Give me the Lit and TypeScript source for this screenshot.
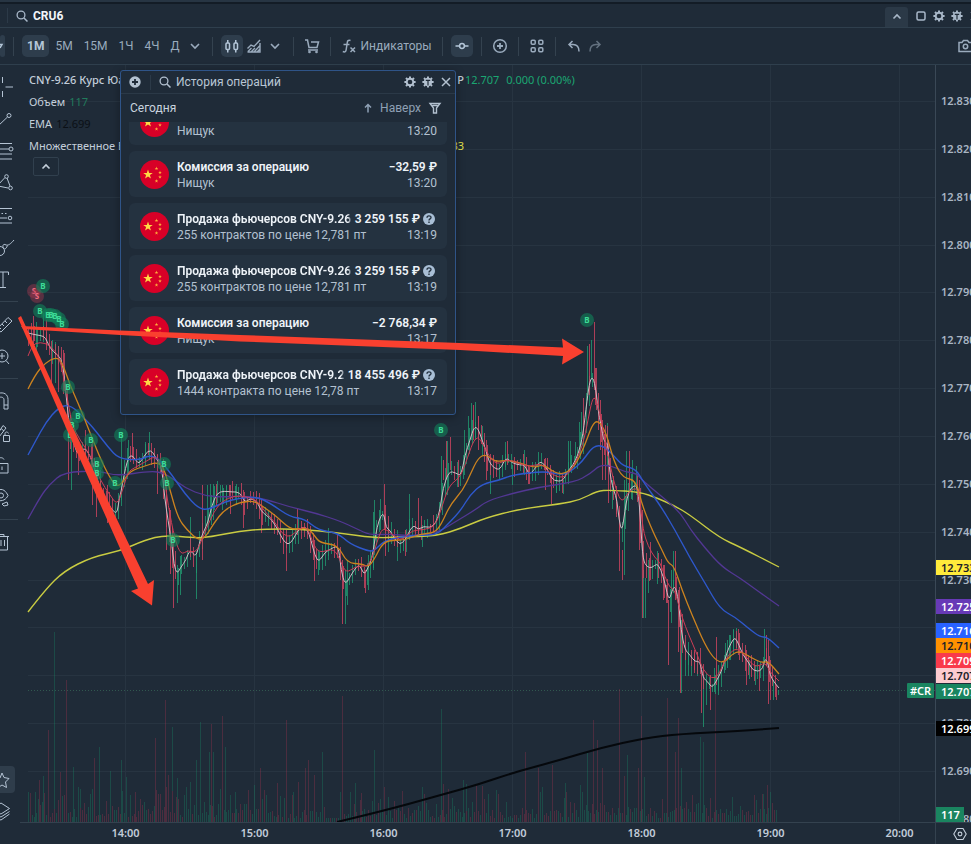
import { LitElement, html, svg, css } from "lit";
import { customElement } from "lit/decorators.js";

type Pt = [number, number];

const HOUR = 129;
const FIRST_HOUR_X = 125;
const PRICE_STEP = 47.86;
const FIRST_PRICE_Y = 101;
const BASE_Y = 822;

const pts = (s: string): Pt[] =>
  s.trim().split(/\s+/).map((p) => p.split(",").map(Number) as Pt);

const FAST = pts(`28,333 36,335 44,336 47,341 50,348 57,355 61,358 64,373 67,405 70,430 75,447 78,455 84,447 90,455 95,470 100,490 106,500
112,510 117,514 119,500 121,492 124,475 127,462 130,455 134,457 138,464 142,460 148,450 153,452 156,459 161,464 163,480 165,500 168,520
172,545 174,565 177,574 181,567 186,560 190,549 196,558 200,540 204,531 208,522 212,505 217,493 224,491 232,492 240,492 245,503 250,498
257,501 261,511 266,515 272,520 278,530 283,540 288,545 293,540 298,530 303,527 307,528 311,540 315,556 319,562 325,552 331,549 336,546
339,550 341,570 345,585 350,577 356,567 360,565 364,575 368,568 372,558 374,545 377,527 381,515 384,514 386,528 390,530 394,538 400,545
405,540 410,530 414,525 418,530 424,526 430,528 436,523 440,510 443,488 449,471 456,473 461,476 465,455 470,440 474,427 478,428 482,440
486,450 489,462 494,468 500,470 506,457 512,463 520,465 525,465 529,475 534,470 540,461 545,465 550,475 554,481 563,481 567,472 573,465
578,455 583,435 587,400 590,380 593,377 596,390 598,410 601,425 604,442 608,443 609,465 611,480 614,491 617,500 619,520 622,532 625,510
627,498 631,487 637,485 639,500 641,530 643,560 647,567 652,568 657,563 661,570 665,583 669,602 673,587 676,588 679,605 681,630 685,650
690,655 695,662 700,661 703,678 708,682 712,688 717,680 722,670 727,652 731,643 735,637 739,645 743,655 749,663 753,671 762,671 765,658
768,663 770,675 774,682 779,688`);
const RED = pts(`28,356 32,345 40,342 50,345 60,358 65,385 72,425 80,440 90,455 100,480 110,495 117,505 122,492 128,472 134,468 145,462 155,456
160,462 164,475 168,505 175,540 181,555 188,550 196,553 203,537 210,520 218,505 228,498 240,495 257,500 265,512 275,522 283,535 291,537
298,529 307,526 314,546 320,553 334,548 341,562 346,573 355,567 362,566 368,566 374,553 380,532 385,528 396,538 403,540 412,530 424,530
435,526 441,510 449,485 461,477 470,450 475,438 480,438 488,455 497,465 507,459 518,463 530,467 541,463 549,473 563,479 573,468 583,445
588,420 592,400 595,397 598,405 604,435 610,465 616,490 622,503 628,492 637,487 640,500 643,530 648,546 655,558 660,562 665,577 670,588
675,590 681,615 690,638 697,654 703,670 712,679 718,676 725,660 735,647 745,655 755,668 765,662 770,672 779,681`);
const ORANGE = pts(`28,389 35,375 45,363 56,357 62,362 70,385 78,403 87,425 100,458 110,478 117,487 123,482 130,471 145,466 157,462 164,468
170,490 178,518 187,530 198,540 205,538 214,523 224,510 240,502 255,501 265,508 276,516 290,529 300,529 308,528 314,535 320,543 338,545
347,563 362,564 368,567 374,560 383,542 395,540 405,540 420,534 434,533 441,525 450,505 463,490 470,475 478,458 486,454 495,462 507,460
520,463 535,468 543,464 555,473 565,474 575,466 585,445 592,425 598,420 606,432 614,462 623,478 636,480 642,505 653,532 662,550 668,563
674,566 682,590 692,615 705,645 715,660 724,663 732,654 740,651 750,657 762,663 768,661 779,674`);
const BLUE = pts(`28,455 35,442 46,422 58,408 70,404 86,420 95,430 108,447 119,459 140,460 150,455 160,460 172,475 185,494 198,508 208,510
224,502 240,498 257,497 270,503 290,517 305,519 318,530 338,533 350,544 368,551 374,551 384,541 400,537 420,535 437,535 450,522 461,510
470,495 482,484 500,480 512,475 545,471 560,475 570,472 582,462 590,450 597,445 605,447 614,456 623,466 636,469 644,483 660,505 675,530
690,558 705,583 720,609 735,617 748,628 760,637 767,637 779,648`);
const PURPLE = pts(`28,519 40,497 50,484 64,472 100,471 117,476 150,471 165,473 185,488 205,496 225,497 245,496 265,499 290,507 315,513
340,521 357,529 370,535 390,534 410,536 437,533 455,522 475,510 487,501 510,494 540,487 575,482 590,474 600,465 612,466 625,472 636,473
643,481 660,495 680,512 690,529 705,548 722,567 740,578 755,589 779,606`);
const YELLOW = pts(`28,612 45,590 64,571 92,557 120,551 145,540 165,535 195,538 210,537 240,531 265,529 300,529 340,533 375,538 400,537
437,536 462,528 485,518 520,509 560,504 580,500 597,491 610,490 640,492 657,498 675,506 690,515 720,538 740,547 779,567`);
const BLACK = pts(`337,822 383,811 441,795 480,784 512,773 560,760 600,748 645,738 680,734 740,731 779,728`);

const linePath = (p: Pt[]): string => {
  let d = `M${p[0][0]} ${p[0][1]}`;
  for (let i = 1; i < p.length - 1; i++) {
    const mx = (p[i][0] + p[i + 1][0]) / 2;
    const my = (p[i][1] + p[i + 1][1]) / 2;
    d += `Q${p[i][0]} ${p[i][1]} ${mx} ${my}`;
  }
  const last = p[p.length - 1];
  return d + `L${last[0]} ${last[1]}`;
};

const valueAt = (p: Pt[], x: number): number => {
  for (let i = 1; i < p.length; i++) {
    if (x <= p[i][0]) {
      const [x0, y0] = p[i - 1];
      const [x1, y1] = p[i];
      return y0 + ((y1 - y0) * (x - x0)) / (x1 - x0);
    }
  }
  return p[p.length - 1][1];
};

let seed = 41;
const rnd = (): number => {
  seed = (seed * 1103515245 + 12345) % 2147483648;
  return seed / 2147483648;
};

/* Wicks that stand out from the rest: x, high, low, rising */
const SPIKES: [number, number, number, number][] = [
  [33, 316, 345, 0], [36, 322, 352, 1], [43, 313, 342, 1], [46, 320, 350, 0], [51, 341, 384, 0], [55, 342, 383, 1], [58, 346, 392, 0],
  [63, 350, 394, 0], [68, 425, 480, 0], [71, 440, 490, 1], [78, 440, 475, 0], [85, 430, 460, 0], [92, 440, 505, 0], [96, 470, 517, 0],
  [100, 470, 500, 1], [107, 485, 523, 0], [121, 435, 500, 1], [128, 440, 475, 1], [132, 433, 460, 0], [145, 442, 466, 1],
  [149, 432, 460, 1], [157, 455, 494, 0], [166, 480, 550, 0], [170, 510, 574, 0], [173, 540, 608, 0], [177, 565, 603, 1],
  [180, 556, 595, 1], [190, 517, 560, 1], [196, 555, 599, 1], [202, 485, 560, 0], [207, 485, 525, 1], [210, 484, 520, 1],
  [213, 484, 520, 1], [216, 484, 505, 0], [222, 485, 510, 1], [226, 485, 505, 1], [230, 485, 514, 0], [236, 484, 505, 1],
  [243, 490, 528, 0], [261, 500, 533, 0], [286, 530, 571, 0], [297, 508, 535, 0], [314, 540, 581, 0], [318, 550, 575, 1],
  [328, 528, 556, 1], [342, 560, 624, 0], [345, 570, 624, 1], [347, 560, 605, 1], [365, 570, 593, 0], [368, 555, 590, 1],
  [373, 512, 570, 1], [374, 500, 555, 1], [380, 499, 530, 1], [384, 484, 530, 0], [385, 505, 556, 0], [388, 525, 552, 1],
  [397, 530, 561, 1], [405, 530, 556, 0], [409, 494, 540, 1], [418, 498, 535, 0], [422, 525, 547, 1], [441, 456, 510, 1],
  [443, 460, 480, 0], [446, 441, 480, 0], [447, 441, 495, 1], [450, 437, 470, 0], [458, 460, 487, 0], [464, 430, 475, 1],
  [468, 416, 450, 1], [471, 403, 440, 1], [473, 405, 440, 0], [475, 402, 440, 1], [478, 416, 450, 0], [482, 426, 456, 1],
  [486, 440, 480, 0], [490, 458, 494, 1], [505, 442, 470, 1], [507, 441, 465, 0], [512, 465, 485, 1], [524, 450, 475, 1],
  [528, 465, 484, 0], [545, 458, 490, 0], [551, 470, 504, 0], [556, 475, 493, 1], [563, 480, 494, 1], [568, 441, 475, 1],
  [570, 441, 470, 1], [575, 442, 465, 1], [579, 422, 455, 1], [581, 412, 445, 1], [583, 398, 435, 0], [587, 346, 400, 1],
  [589, 344, 395, 0], [591, 340, 380, 1], [594, 322, 390, 0], [596, 368, 410, 0], [600, 400, 450, 0], [602, 420, 480, 0],
  [605, 425, 480, 0], [607, 423, 466, 1], [608, 440, 503, 0], [612, 480, 509, 1], [616, 495, 514, 0], [619, 510, 571, 0],
  [622, 550, 580, 0], [624, 480, 575, 1], [626, 451, 510, 1], [629, 451, 490, 0], [632, 460, 500, 1], [636, 466, 495, 1],
  [639, 480, 550, 0], [642, 510, 618, 0], [643, 570, 618, 1], [645, 578, 618, 1], [648, 560, 593, 1], [650, 542, 580, 0],
  [657, 551, 584, 1], [663, 565, 600, 0], [666, 585, 603, 0], [668, 600, 665, 0], [671, 570, 623, 1], [673, 551, 590, 1],
  [675, 551, 600, 0], [678, 590, 652, 0], [680, 610, 693, 0], [681, 620, 693, 1], [685, 652, 676, 1], [688, 652, 676, 1],
  [691, 652, 676, 1], [694, 652, 670, 0], [697, 652, 676, 1], [701, 670, 713, 0], [703, 676, 727, 1], [706, 680, 705, 1],
  [710, 675, 710, 0], [714, 668, 692, 1], [716, 637, 685, 0], [718, 665, 695, 1], [725, 643, 670, 1], [729, 635, 660, 1],
  [733, 630, 655, 1], [736, 628, 650, 1], [738, 629, 655, 0], [746, 650, 685, 0], [749, 660, 679, 1], [755, 665, 685, 1],
  [759, 665, 691, 0], [764, 629, 665, 1], [766, 635, 665, 0], [768, 640, 704, 0], [770, 660, 700, 0], [773, 680, 700, 1],
  [776, 685, 700, 0], [778, 690, 695, 1],
];

const WICKS: [number, number, number, number][] = [];
for (let x = 28; x < 778; x += 3) {
  const y = valueAt(FAST, x);
  const slope = valueAt(FAST, x + 3) - valueAt(FAST, x - 3);
  const reach = 3 + Math.abs(slope) / 4;
  WICKS.push([x, Math.round(y - reach - rnd() * 8), Math.round(y + reach + rnd() * 10), rnd() * 20 - 10 > slope ? 1 : 0]);
}

/* Tall volume bars: x, top, rising */
const VOLUME_PEAKS: [number, number, number][] = [
  [28, 795, 1], [35, 792, 1], [39, 780, 0], [43, 776, 1], [48, 730, 0], [54, 632, 1], [60, 772, 0], [66, 680, 0], [73, 767, 1],
  [80, 789, 1], [94, 758, 0], [99, 747, 1], [110, 771, 1], [121, 760, 1], [126, 777, 1], [135, 792, 0], [155, 738, 0], [165, 700, 0],
  [168, 775, 0], [172, 727, 1], [177, 778, 1], [190, 782, 1], [196, 760, 1], [200, 722, 1], [209, 752, 1], [211, 724, 0],
  [213, 752, 1], [222, 716, 0], [225, 747, 1], [235, 792, 1], [254, 785, 1], [260, 768, 0], [277, 783, 0], [286, 720, 0],
  [293, 792, 1], [298, 782, 0], [305, 768, 0], [308, 760, 0], [314, 775, 0], [322, 752, 1], [342, 696, 0], [355, 783, 1],
  [361, 793, 0], [374, 750, 1], [384, 787, 0], [441, 709, 1], [443, 784, 0], [463, 780, 1], [466, 784, 1], [476, 785, 0],
  [525, 752, 0], [538, 768, 0], [552, 765, 0], [565, 783, 1], [580, 785, 1], [587, 753, 1], [593, 720, 0], [597, 740, 0],
  [602, 768, 0], [619, 689, 0], [624, 776, 0], [627, 755, 1], [638, 768, 0], [641, 716, 0], [644, 777, 1], [667, 698, 0],
  [675, 752, 0], [678, 718, 0], [681, 768, 1], [700, 737, 1], [703, 742, 1], [715, 690, 0], [763, 794, 1], [767, 785, 0],
];
const VOLUME: [number, number, number][] = [];
for (let x = 28; x < 778; x += 2) {
  const busy = x > 155 && x < 180 ? 24 : 10;
  const h = x > 325 && x < 340 ? 4 : 4 + rnd() * busy + (rnd() > 0.66 ? rnd() * 24 : 0);
  VOLUME.push([x, Math.round(BASE_Y - h), (x > 155 && x < 176) || rnd() > 0.58 ? 0 : 1]);
}

const bars = (list: [number, number, number, number][], rising: number): string =>
  list.filter((b) => b[3] === rising).map((b) => `M${b[0] + 0.5} ${b[1]}V${b[2]}`).join("");
const volumeBars = (list: [number, number, number][], rising: number): string =>
  list.filter((b) => b[2] === rising).map((b) => `M${b[0] + 0.5} ${BASE_Y}V${b[1]}`).join("");

const BUYS = pts(`43,286 40,311 48,315 51,315 55,316 59,319 62,324 68,387 78,416 72,425 70,435 91,440 97,464 97,473 115,483 121,435
164,464 167,483 173,540 441,430 587,320`);
const SELLS = pts(`34,291 37,296`);

const TAGS: { label: string; y: number; tone: string }[] = [
  { label: "12.733", y: 567, tone: "yellow" },
  { label: "12.725", y: 606, tone: "purple" },
  { label: "12.716", y: 630, tone: "blue" },
  { label: "12.710", y: 645, tone: "orange" },
  { label: "12.709", y: 660, tone: "red" },
  { label: "12.707", y: 675, tone: "pink" },
  { label: "12.707", y: 691, tone: "green" },
  { label: "12.699", y: 728, tone: "black" },
];

const OPERATIONS = [
  { title: "Комиссия за операцию", note: "Нищук", sum: "−32,59 ₽", time: "13:20", help: false },
  { title: "Комиссия за операцию", note: "Нищук", sum: "−32,59 ₽", time: "13:20", help: false },
  { title: "Продажа фьючерсов CNY-9.26 Курс", note: "255 контрактов по цене 12,781 пт", sum: "3 259 155 ₽", time: "13:19", help: true },
  { title: "Продажа фьючерсов CNY-9.26 Курс", note: "255 контрактов по цене 12,781 пт", sum: "3 259 155 ₽", time: "13:19", help: true },
  { title: "Комиссия за операцию", note: "Нищук", sum: "−2 768,34 ₽", time: "13:17", help: false },
  { title: "Продажа фьючерсов CNY-9.26 Курс", note: "1444 контракта по цене 12,78 пт", sum: "18 455 496 ₽", time: "13:17", help: true },
];

const star = (cx: number, cy: number, r: number): string =>
  Array.from({ length: 10 }, (_, i) => {
    const a = -Math.PI / 2 + (i * Math.PI) / 5;
    const q = i % 2 ? r * 0.4 : r;
    return `${(cx + q * Math.cos(a)).toFixed(2)},${(cy + q * Math.sin(a)).toFixed(2)}`;
  }).join(" ");

const icon = (size: number, body: unknown) => html`<svg
  class="icon" width=${size} height=${size} viewBox="0 0 ${size} ${size}" fill="none" stroke="currentColor"
  stroke-width="1.5" aria-hidden="true">${body}</svg>`;

const TEETH = "M6 .4v1.800M6 9.800v1.800M.4 6h1.800M9.800 6h1.800M2 2l1.300 1.300M8.700 8.700L10 10M10 2L8.700 3.300M3.300 8.700L2 10";
const searchIcon = () => icon(12, svg`<circle cx="5" cy="5" r="3.900" stroke-width="1.300"/><path d="M8 8l3.500 3.500" stroke-width="1.500"/>`);
const gearIcon = () => icon(12, svg`<circle cx="6" cy="6" r="3.300" stroke-width="1.900"/><path stroke-width="2" d=${TEETH}/>`);
const bugIcon = () => icon(12, svg`<circle cx="6" cy="6" r="4.200" fill="currentColor" stroke="none"/>
  <path stroke-width="1.900" d=${TEETH}/><path class="cut" stroke-width="1.200" d="M6 4v5.500M3.800 4.300h4.400"/>`);
const closeIcon = () => icon(12, svg`<path d="M2 2l8 8M10 2l-8 8"/>`);
const chevronDown = () => icon(12, svg`<path stroke-width="1.600" d="M2 4l4 4 4-4"/>`);
const chevronUp = () => icon(12, svg`<path stroke-width="1.600" d="M2.500 7.500L6 4l3.500 3.500"/>`);

const RAIL: { name: string; art: unknown }[][] = [
  [
    { name: "Перекрестие", art: svg`<path d="M2.500 0v6M2.500 14v6M5.500 10H13"/>` },
    { name: "Линия тренда", art: svg`<path d="M-2 17L7.500 8"/><circle cx="9" cy="6.500" r="2"/>` },
    { name: "Уровни Фибоначчи", art: svg`<path d="M-2 2.500h14M-2 8h11M-2 13h14M-2 18h14"/><circle cx="11" cy="8" r="2"/>` },
    { name: "Паттерны", art: svg`<path d="M-2 12L5 4.500M7 5l3 8M-2 13l10 2"/><circle cx="6.500" cy="3.500" r="1.800"/><circle cx="10.500" cy="15" r="1.800"/>` },
    { name: "Прогноз", art: svg`<path d="M-2 3.500h14M-2 13h9M-2 18h14" /><path stroke-dasharray="1.500 2" d="M-2 8.500h10"/><circle cx="10" cy="13" r="1.800"/>` },
    { name: "Кисть", art: svg`<circle cx="0" cy="14" r="4.500"/><path d="M4 12c-2-3-1-5 1-4.500 3 2 6-1 9-4.500M4.500 12c1 0 2-1 3-3.500"/>` },
    { name: "Текст", art: svg`<path d="M-2 3h10.500v3M3 3v15M0 18.500h6"/>` },
  ],
  [
    { name: "Линейка", art: svg`<path d="M-3 15L8 3.500l4 3.500L1 18l-3-2M5 7l2 2M2 10l2 2M-1 13l2 2"/>` },
    { name: "Увеличить", art: svg`<circle cx="2" cy="10" r="6"/><path d="M-1 10h6M2 7v6M6 14.500l3 3.500"/>` },
  ],
  [
    { name: "Магнит", art: svg`<path d="M-2 2.500c6-2 10 1 10 6V18H4V9C4 6.500 2 5.500-2 6.500M4 14h4"/>` },
    { name: "Режим рисования", art: svg`<path d="M-3 12L3 2.500l3 2.500L-1 14M1 5.500l3 2.500M3.500 12.500h6v6h-6zM5 12.500v-2c0-2 3-2 3.500 0"/>` },
    { name: "Блокировка", art: svg`<path d="M-3 8.500H8V18H-3M2 11.500v3.500M-2 8V5c0-3 5-3 6-.5"/>` },
    { name: "Скрыть", art: svg`<path d="M-3 3.500c6-3 9 1 11 5-2 4-5 6-11 5M2 17l5-2 1 3-4 1z"/><circle cx="1" cy="8.500" r="2.500"/>` },
  ],
  [{ name: "Удалить", art: svg`<path d="M-2 4.500H9M-1 4V2.500h5V4M7.500 5v13H-2M4.500 8v6M1 8v6"/>` }],
];

@customElement("app-root")
export class AppRoot extends LitElement {
  static styles = css`
    :host {
      display: flex; flex-direction: column; min-height: 100vh; position: relative; overflow: hidden;
      background: #1f2b38; color: #a9b8c9; font: 12px/16px Roboto, "Noto Sans", sans-serif;
    }
    * { box-sizing: border-box; }
    button {
      font: inherit; color: inherit; background: none; border: 0; padding: 0; margin: 0; cursor: pointer;
      display: inline-flex; align-items: center; justify-content: center;
    }
    .icon { display: block; flex: none; overflow: visible; }
    .cut { stroke: #1f2b38; }
    .strip { height: 4px; border-bottom: 2px solid #131c26; background: #273543; }
    .head { display: flex; align-items: center; height: 24px; border-bottom: 1px solid #2f3f4d; padding-left: 7px; }
    .head .split { width: 1px; height: 15px; background: #2c3a48; margin-right: 8px; }
    .symbol { display: flex; align-items: center; gap: 5px; flex: 1; }
    .symbol strong { color: #f2f6fa; font-weight: 700; }
    .fold { width: 23px; height: 20px; background: #2b3947; border-radius: 3px 3px 0 0; margin: 3px 7px 0 0; }
    .tools { display: flex; align-items: center; gap: 6px; width: 56px; }
    .bar { display: flex; align-items: center; height: 37px; border-bottom: 1px solid #2f3f4d; gap: 1px; color: #9aabbd; }
    .bar .split { width: 1px; height: 19px; background: #34424f; margin: 0 7px; flex: none; }
    .bar button { height: 22px; padding: 0 5px; border-radius: 5px; flex: none; }
    .bar .square { width: 20px; padding: 0; }
    .bar .slim { width: 18px; padding: 0; }
    .bar .on { background: #2e3d4c; color: #b4c6d8; }
    .bar .square.on { width: 22px; }
    .bar .cropped { width: 5px; padding: 0; overflow: hidden; }
    .bar .wide { gap: 5px; padding: 0 2px 0 3px; }
    .bar .dim { color: #63717f; }
    .bar .end { margin-left: auto; width: 13px; padding: 0; justify-content: flex-start; overflow: hidden; }
    .main { flex: 1; display: grid; grid-template-columns: 20px 1fr 36px; grid-template-rows: minmax(0, 1fr) 22px; position: relative; }
    .rail { grid-row: 1 / 3; display: flex; flex-direction: column; padding-top: 6px; overflow: hidden; color: #b5c4d4; }
    .rail button { height: 32px; width: 20px; flex: none; overflow: hidden; }
    .rail hr { width: 18px; height: 1px; border: 0; background: #34424f; margin: 6px 0; }
    .rail .push { margin-top: auto; }
    .rail .fav { width: 15px; height: 27px; background: #2f3d4b; border-radius: 0 4px 4px 0; margin-bottom: 2px; }
    .rail .last { margin-bottom: 17px; }
    .plot { position: relative; min-width: 0; overflow: hidden; }
    .chart { position: absolute; inset: 0; width: 100%; height: 100%; display: block; }
    .mark { font: 700 8px/8px "Noto Sans", sans-serif; text-anchor: middle; }
    .legend {
      position: absolute; left: 9px; top: 4px; width: 546px; color: #c3ceda;
      font: 11px/16px "Noto Sans", sans-serif;
    }
    .legend p { margin: 0; height: 22px; display: flex; align-items: center; gap: 4px; white-space: nowrap; }
    .legend .span { width: 435px; flex: none; display: flex; justify-content: space-between; }
    .legend .first { gap: 1px; font-weight: 500; }
    .legend .value { font-weight: 400; }
    .up { color: #1ba672; }
    .down { color: #217b5c; }
    .dark { color: #0b1016; }
    .gold { color: #e0e34c; }
    .legend .toggle { width: 26px; height: 19px; border: 1px solid #31404e; border-radius: 2px; margin-left: 4px; }
    .last-tag {
      position: absolute; right: 1px; top: 618px; width: 27px; height: 15px; background: #1a8560; color: #fff;
      font: 600 11px/15px "Noto Sans", sans-serif; text-align: center; border-radius: 1px;
    }
    .prices {
      position: relative; overflow: hidden; border-left: 1px solid #3a4856; font: 600 11px/16px "Noto Sans", sans-serif;
      color: #a9b5c3; padding: 28px 0 0 5px; min-height: 0;
    }
    .scale { display: flex; flex-direction: column; justify-content: space-between; height: 734px; margin-bottom: -30px; }
    .tag { position: absolute; left: 0; width: 60px; height: 15px; line-height: 15px; padding-left: 5px; color: #fff; margin-top: -7px; }
    .yellow { background: #ffeb3b; color: #1b2028; }
    .purple { background: #673ab7; }
    .blue { background: #2962ff; }
    .orange { background: #ff9100; color: #1b2028; }
    .red { background: #f93a4b; }
    .pink { background: #fdcbd0; color: #1b2028; }
    .green { background: #1a8560; }
    .black { background: #000; }
    .volume { width: 28px; background: #1a8560; top: 749px; }
    .times {
      border-top: 1px solid #34424f; display: grid; grid-template-columns: repeat(7, 129px); padding-left: 41px;
      font: 600 11px/20px "Noto Sans", sans-serif; color: #c2ccd8; text-align: center; overflow: hidden;
    }
    .corner { border-left: 1px solid #34424f; border-top: 1px solid #34424f; display: flex; padding-left: 17px; align-items: center; color: #c3ceda; }
    .panel {
      position: absolute; left: 120px; top: 70px; width: 336px; height: 345px; border: 1px solid #2f5488; border-radius: 3px;
      background: #1f2b38; display: flex; flex-direction: column; box-shadow: 0 2px 10px #0005; font-size: 12px; color: #b3c1d0;
    }
    .panel header { display: flex; align-items: center; height: 23px; border-bottom: 1px solid #2b3947; padding: 0 3px 0 8px; }
    .panel header .split { width: 1px; height: 15px; background: #2c3a48; margin: 0 8px 0 9px; }
    .panel h2 { margin: 0 auto 0 5px; font: inherit; color: #b9c6d4; }
    .panel .acts { display: flex; gap: 6px; }
    .day { display: flex; align-items: center; height: 28px; padding: 0 14px 0 9px; }
    .day span { flex: 1; color: #c9d3df; }
    .day button { gap: 7px; margin-right: 8px; color: #8fa1b5; }
    .list {
      height: 283px; margin: 0 8px; padding: 0; list-style: none; display: flex; flex-direction: column; justify-content: flex-end;
      gap: 6px; overflow: hidden;
    }
    .op { flex: none; height: 46px; background: #243240; border-radius: 6px; display: grid; grid-template-columns: 29px 1fr; gap: 8px; padding: 0 10px 0 11px; align-items: center; }
    .lines { min-width: 0; padding-top: 2px; }
    .pair { display: flex; gap: 3px; height: 16px; align-items: center; white-space: nowrap; }
    .pair .grow { flex: 1; min-width: 0; overflow: hidden; }
    .pair .fade { mask-image: linear-gradient(to left, transparent, #000 4px); }
    .title { color: #eef3f8; font-weight: 600; }
    .help { margin-right: 2px; color: #a9bfd6; }
    .arrows { position: absolute; left: 0; top: 0; width: 600px; height: 620px; pointer-events: none; fill: #f9402f; }
  `;

  private gridLines() {
    const v = Array.from({ length: 7 }, (_, i) => `M${FIRST_HOUR_X + i * HOUR + 0.5} 65V${BASE_Y}`).join("");
    const h = Array.from({ length: 15 }, (_, i) => `M28 ${Math.round(FIRST_PRICE_Y + i * PRICE_STEP) + 0.5}H2000`).join("");
    return v + h;
  }

  private chart() {
    return html`<svg class="chart" role="img" aria-label="График CNY-9.26">
      <g transform="translate(-20 -65)" fill="none" stroke-linejoin="round">
        <path d=${this.gridLines()} stroke="#273441"/>
        <path d="M28 690.500H2000" stroke="#31584f" stroke-dasharray="1 2"/>
        <g opacity=".3">
          <path d=${volumeBars(VOLUME, 1) + volumeBars(VOLUME_PEAKS, 1)} stroke="#16946a"/>
          <path d=${volumeBars(VOLUME, 0) + volumeBars(VOLUME_PEAKS, 0)} stroke="#b0344f"/>
        </g>
        <path d=${linePath(BLACK)} stroke="#05080c" stroke-width="2"/>
        <path d=${bars(WICKS, 1) + bars(SPIKES, 1)} stroke="#209a70" opacity=".8"/>
        <path d=${bars(WICKS, 0) + bars(SPIKES, 0)} stroke="#cf4560" opacity=".8"/>
        <path d=${linePath(FAST)} stroke="#cdbcc4"/>
        <path d=${linePath(YELLOW)} stroke="#c9cc42" stroke-width="1.400"/>
        <path d=${linePath(PURPLE)} stroke="#523793" stroke-width="1.300"/>
        <path d=${linePath(BLUE)} stroke="#2e58cc" stroke-width="1.400"/>
        <path d=${linePath(ORANGE)} stroke="#cc831f" stroke-width="1.300"/>
        <path d=${linePath(RED)} stroke="#cc3d55"/>
        ${SELLS.map(([x, y]) => svg`<circle cx=${x} cy=${y} r="7" fill="#b23a50" fill-opacity=".4"/>
          <text class="mark" x=${x} y=${y + 3} fill="#ee6b80">S</text>`)}
        ${BUYS.map(([x, y]) => svg`<circle cx=${x} cy=${y} r="7" fill="#10825a" fill-opacity=".6"/>`)}
        ${BUYS.map(([x, y]) => svg`<text class="mark" x=${x} y=${y + 3} fill="#3ddc97">B</text>`)}
      </g>
    </svg>`;
  }

  private flag() {
    return html`<svg class="icon" width="29" height="29" viewBox="0 0 29 29" aria-hidden="true">
      <circle cx="14.500" cy="14.500" r="14.500" fill="#d80027"/>
      <polygon points=${star(8, 14.500, 5)} fill="#ffda44"/>
      ${[[16.5, 8.5], [20, 12.5], [20, 17], [16.5, 21]].map(([x, y]) => svg`<polygon points=${star(x, y, 1.9)} fill="#ffb03a"/>`)}
    </svg>`;
  }

  private panel() {
    return html`<section class="panel" aria-label="История операций">
      <header>
        <button aria-label="Добавить">${icon(12, svg`<circle cx="6" cy="6" r="5.700" fill="currentColor" stroke="none"/><path class="cut" stroke-width="1.800" d="M6 3v6M3 6h6"/>`)}</button>
        <i class="split"></i>${searchIcon()}
        <h2>История операций</h2>
        <div class="acts">
          <button aria-label="Настройки">${gearIcon()}</button>
          <button aria-label="Сообщить об ошибке">${bugIcon()}</button>
          <button aria-label="Закрыть">${closeIcon()}</button>
        </div>
      </header>
      <div class="day">
        <span>Сегодня</span>
        <button>${icon(10, svg`<path d="M5 9.500V1.500M2 4.500l3-3 3 3"/>`)}Наверх</button>
        ${icon(12, svg`<path d="M1 1.500h10L7.500 6v5h-3V6z M3.500 3.500h5" stroke-width="1.400"/>`)}
      </div>
      <ul class="list">
        ${OPERATIONS.map((o) => html`<li class="op">
          ${this.flag()}
          <div class="lines">
            <div class="pair title">
              <span class="grow ${o.help ? "fade" : ""}">${o.title}</span><span>${o.sum}</span>
              ${o.help ? html`<svg class="icon help" width="12" height="12" viewBox="0 0 12 12" fill="none" role="img" aria-label="Подсказка">
                <circle cx="6" cy="6" r="6" fill="currentColor"/>
                <path d="M4 4.700C4 2.200 8 2.300 8 4.500 8 6 6 5.800 6 7.500M6 8.600v1.300" stroke="#243240" stroke-width="1.400"/></svg>` : ""}
            </div>
            <div class="pair"><span class="grow">${o.note}</span><span>${o.time}</span></div>
          </div>
        </li>`)}
      </ul>
    </section>`;
  }

  render() {
    return html`
      <div class="strip"></div>
      <header class="head">
        <i class="split"></i>
        <div class="symbol">${searchIcon()}<strong>CRU6</strong></div>
        <button class="fold" aria-label="Свернуть">${chevronUp()}</button>
        <div class="tools">
          <button aria-label="Развернуть">${icon(12, svg`<rect x="2" y="2" width="8" height="8" rx="1.500"/>`)}</button>
          <button aria-label="Настройки">${gearIcon()}</button>
          <button aria-label="Сообщить об ошибке">${bugIcon()}</button>
          <button aria-label="Закрыть">${closeIcon()}</button>
        </div>
      </header>
      <nav class="bar">
        <button class="on cropped" aria-label="Связь">${icon(8, svg`<path d="M0 2.500h3L1 6"/>`)}</button>
        <i class="split"></i>
        <button class="on"><b>1М</b></button><button>5М</button><button>15М</button><button>1Ч</button><button>4Ч</button><button>Д</button>
        <button class="slim" aria-label="Другие интервалы">${chevronDown()}</button>
        <i class="split"></i>
        <button class="square on" aria-label="Свечи">${icon(14, svg`<rect x="1" y="4" width="3.500" height="6.500" rx="1"/><rect x="9" y="4" width="3.500" height="6.500" rx="1"/><path d="M2.750 1v3M2.750 10.500v3M10.750 1v3M10.750 10.500v3"/>`)}</button>
        <button class="square" aria-label="Область">${icon(14, svg`<path stroke-width="1.400" d="M.5 9.500L4 6l3 1.500 6-6.500M13 4v9H.5M1 12.500L4.500 9M4 13l4-4M7 13l6-6.500M10 13l3-3"/>`)}</button>
        <button class="square" aria-label="Тип графика">${chevronDown()}</button>
        <i class="split"></i>
        <button class="square" aria-label="Торговля">${icon(14, svg`<path d="M0 1h2.500l1.500 7.500h8L13.500 3H6M3 11h10"/><circle cx="4.500" cy="13" r=".6"/><circle cx="11.500" cy="13" r=".6"/>`)}</button>
        <i class="split"></i>
        <button class="wide">${icon(14, svg`<path d="M8.500 1.500C6 .5 5.500 2 5.200 4L4.200 10.500C4 12.500 3 13.500.8 12.500M1.500 5.500h6M8.500 8.500l4.500 4.500M13 8.500L8.500 13"/>`)}Индикаторы</button>
        <i class="split"></i>
        <button class="square on" aria-label="Линия уровня">${icon(14, svg`<circle cx="7" cy="7" r="2.400"/><path d="M.5 7h4M9.500 7h4"/>`)}</button>
        <i class="split"></i>
        <button class="square" aria-label="Сравнить">${icon(14, svg`<circle cx="7" cy="7" r="6.300"/><path stroke-width="1.800" d="M7 4v6M4 7h6"/>`)}</button>
        <i class="split"></i>
        <button class="square" aria-label="Шаблоны">${icon(14, svg`<rect x="1.200" y="1.200" width="4" height="4" rx="1"/><rect x="8.800" y="1.200" width="4" height="4" rx="1"/><rect x="1.200" y="8.800" width="4" height="4" rx="1"/><rect x="8.800" y="8.800" width="4" height="4" rx="1"/>`)}</button>
        <i class="split"></i>
        <button class="square" aria-label="Отменить">${icon(14, svg`<path d="M5.500 2L2 5.500 5.500 9M2 5.500h4c4 0 6 3 6 7"/>`)}</button>
        <button class="square dim" aria-label="Повторить">${icon(14, svg`<path d="M8.500 2L12 5.500 8.500 9M12 5.500H8c-4 0-6 3-6 7"/>`)}</button>
        <button class="end" aria-label="Снимок">${icon(14, svg`<path d="M1 3.500h3l1.500-2h4l1.500 2h3v9H1z"/><circle cx="7.500" cy="7.500" r="2.200"/>`)}</button>
      </nav>
      <main class="main">
        <aside class="rail">
          ${RAIL.map((group, i) => html`${i ? html`<hr>` : ""}${group.map((t) => html`<button aria-label=${t.name}>
            <svg class="icon" width="20" height="20" viewBox="0 0 20 20" fill="none" stroke="currentColor" aria-hidden="true">${t.art}</svg></button>`)}`)}
          <button class="push fav" aria-label="Избранное"><svg class="icon" width="15" height="20" viewBox="0 0 15 20" fill="none" stroke="currentColor" aria-hidden="true"><path d="M-4 8h4L2 3l2 4.500 5 1-3.500 3.500 1 5.500L2 15l-3 2"/></svg></button>
          <button class="last" aria-label="Слои"><svg class="icon" width="20" height="20" viewBox="0 0 20 20" fill="none" stroke="currentColor" aria-hidden="true"><path d="M-2 4l3-2 8.500 5.500L1 13l-3-1M9.500 10.500L1 16l-3-1M9.500 13L1 19l-3-1"/></svg></button>
        </aside>
        <div class="plot">
          ${this.chart()}
          <div class="legend">
            <p class="first"><span class="span"><span>CNY-9.26 Курс Юань – Рубль</span><span>Р</span></span><span class="up value">12.707</span><span class="up value">&nbsp; 0.000 (0.00%)</span></p>
            <p>Объем <span class="down value">117</span></p>
            <p>EMA <span class="dark value">12.699</span></p>
            <p><span class="span"><span>Множественное EMA</span><span class="gold value">12.733</span></span></p>
            <button class="toggle" aria-label="Свернуть индикаторы">${chevronUp()}</button>
          </div>
          <span class="last-tag">#CR</span>
        </div>
        <div class="prices">
          <div class="scale">${Array.from({ length: 16 }, (_, i) => html`<span>${(12.83 - i * 0.01).toFixed(3)}</span>`)}</div>
          ${TAGS.map((t) => html`<span class="tag ${t.tone}" style="top:${t.y - 65}px">${t.label}</span>`)}
          <span class="tag volume">117</span>
        </div>
        <div class="times">${Array.from({ length: 7 }, (_, i) => html`<span>${14 + i}:00</span>`)}</div>
        <div class="corner"><button aria-label="Настройки шкалы">${icon(14, svg`<path stroke-width="1.100" d="M4 1.500h6L13.200 7 10 12.500H4L.8 7z"/><circle cx="7" cy="7" r="1.900" stroke-width="1.100"/>`)}</button></div>
      </main>
      ${this.panel()}
      <svg class="arrows" aria-hidden="true">
        <polygon points="18,318 21,316 74,430 148,584 154,580 152,605.500 131,591 138,588.500 67,430"/>
        <polygon points="21,326 120,330.500 240,335 460,343 563,347.500 562,338.500 584,352 562,364.500 563,356 460,350 240,341.500 120,335 23,329"/>
      </svg>`;
  }
}
